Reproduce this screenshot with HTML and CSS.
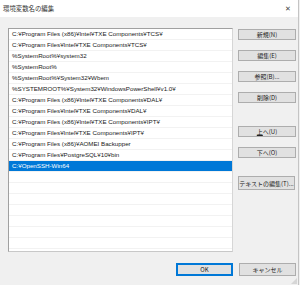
FILE: index.html
```html
<!DOCTYPE html>
<html lang="ja">

<head>
    <meta charset="UTF-8">
    <meta name="viewport" content="width=device-width, initial-scale=1.0">
    <title>環境変数名の編集</title>

    <link rel="stylesheet" href="styles.css">
</head>

<body>
    <div class="window">
        <div class="titlebar">
            <span class="title">環境変数名の編集</span>
            <span class="close">✕</span>
        </div>

        <div class="main">
            <ul class="list">
                <li>C:¥Program Files (x86)¥Intel¥TXE Components¥TCS¥</li>
                <li>C:¥Program Files¥Intel¥TXE Components¥TCS¥</li>
                <li>%SystemRoot%¥system32</li>
                <li>%SystemRoot%</li>
                <li>%SystemRoot%¥System32¥Wbem</li>
                <li>%SYSTEMROOT%¥System32¥WindowsPowerShell¥v1.0¥</li>
                <li>C:¥Program Files (x86)¥Intel¥TXE Components¥DAL¥</li>
                <li>C:¥Program Files¥Intel¥TXE Components¥DAL¥</li>
                <li>C:¥Program Files (x86)¥Intel¥TXE Components¥IPT¥</li>
                <li>C:¥Program Files¥Intel¥TXE Components¥IPT¥</li>
                <li>C:¥Program Files (x86)¥AOMEI Backupper</li>
                <li>C:¥Program Files¥PostgreSQL¥10¥bin</li>
                <li class="active">C:¥OpenSSH-Win64</li>
                <li></li>
                <li></li>
                <li></li>
                <li></li>
                <li></li>
                <li></li>
                <li></li>
                <li></li>
            </ul>

            <div class="side">
                <button class="btn">新規(N)</button>
                <button class="btn">編集(E)</button>
                <button class="btn">参照(B)...</button>
                <button class="btn">削除(D)</button>
                <button class="btn sep"><u>上</u>へ(U)</button>
                <button class="btn">下へ(O)</button>
                <button class="btn sep btn-tall">テキストの編集(T)...</button>
            </div>
        </div>

        <div class="footer">
            <button class="btn btn-ok">OK</button>
            <button class="btn">キャンセル</button>
            <span class="grip"></span>
        </div>
    </div>
</body>

</html>
```

FILE: styles.css
```css
* {
    margin: 0;
    padding: 0;
    list-style: none;
    box-sizing: border-box;
}

body {
    background: #f0f0f0;
    font-family: "Liberation Sans", "Noto Sans CJK JP", sans-serif;
    font-size: 6.2px;
    color: #1a1a1a;
}

.window {
    width: 299px;
    height: 285px;
    border-right: 1px solid #c4c4c4;
    position: relative;
}

.titlebar {
    height: 17px;
    background: #fff;
    display: flex;
    align-items: center;
    justify-content: space-between;
    padding: 0 7px 0 3px;
}

.title {
    font-family: "Noto Sans CJK JP", sans-serif;
    font-size: 6.4px;
    color: #333;
}

.close {
    font-size: 7px;
    color: #444;
}

.main {
    display: flex;
    padding: 11px 0 0 8px;
}

.list {
    width: 225px;
    height: 224px;
    background: #fff;
    border: 1px solid #a0a0a0;
    border-right-color: #d6d6d6;
    border-bottom-color: #c8c8c8;
    overflow: hidden;
}

.list li {
    height: 11px;
    line-height: 10px;
    padding-left: 3px;
    border-bottom: 1px solid #f2f2f2;
    white-space: nowrap;
}

.list li.active {
    background: #0078d7;
    color: #fff;
}

.side {
    display: flex;
    flex-direction: column;
    align-items: flex-start;
    margin-left: 5px;
    padding-top: 1px;
    gap: 10px;
}

.btn {
    width: 58px;
    height: 11px;
    background: #e1e1e1;
    border: 1px solid #adadad;
    font-family: "Noto Sans CJK JP", sans-serif;
    font-size: 6px;
    line-height: 9px;
    color: #222;
}

.btn u {
    text-decoration: underline;
}

.side .sep {
    margin-top: 13px;
}

.side .btn-tall {
    margin-top: 8px;
    width: 57px;
    height: 14px;
}

.footer {
    display: flex;
    gap: 6px;
    padding: 11px 0 0 176px;
}

.footer .btn {
    height: 13px;
    width: 57px;
}

.footer .btn-ok {
    width: 57px;
    border: 1px solid #0078d7;
    box-shadow: inset 0 0 0 1px #0078d7;
}

.grip {
    position: absolute;
    right: 1px;
    bottom: 1px;
    width: 6px;
    height: 6px;
    background: radial-gradient(circle, #b8b8b8 0.6px, transparent 0.8px) 0 0 / 2px 2px;
    clip-path: polygon(100% 0, 100% 100%, 0 100%);
}
```
